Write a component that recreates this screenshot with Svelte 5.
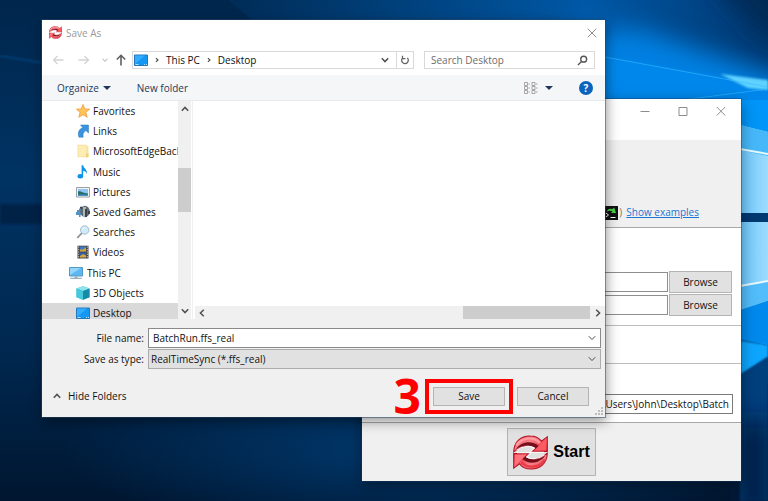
<script lang="ts">
  type TreeItem = { name: string; icon: string; root?: boolean; selected?: boolean };

  const folders: TreeItem[] = [
    { name: 'Favorites', icon: 'star' },
    { name: 'Links', icon: 'link' },
    { name: 'MicrosoftEdgeBack', icon: 'folder' },
    { name: 'Music', icon: 'music' },
    { name: 'Pictures', icon: 'picture' },
    { name: 'Saved Games', icon: 'games' },
    { name: 'Searches', icon: 'search' },
    { name: 'Videos', icon: 'video' },
    { name: 'This PC', icon: 'pc', root: true },
    { name: '3D Objects', icon: 'cube' },
    { name: 'Desktop', icon: 'desktop', selected: true }
  ];

  let fileName = $state('BatchRun.ffs_real');
  let search = $state('');
  let command = $state('\\Users\\John\\Desktop\\Batch');
  let leftFolder = $state('');
  let rightFolder = $state('');
</script>

{#snippet chevron(dir: string)}
  <svg class="chevron {dir}" viewBox="0 0 10 10" aria-hidden="true">
    <path d="M1.800 3.200 5 6.600 8.200 3.200" fill="none" stroke="currentColor" />
  </svg>
{/snippet}

{#snippet arrow(shine: string, head: string)}
  <path d="M2 49C3 18 24 2 50 3c15 0 26 6 33 15L100 5v43H54l14-11C55 27 28 29 2 49Z" fill="url(#red)" stroke="#b41424" stroke-width="3" />
  <path d="M8 42C24 18 55 15 75 32L66 39C52 26 28 28 8 42Z" fill="#74101e" />
  <path d="M10 30C25 6 59 3 78 23" fill="none" stroke={shine} stroke-width="7" />
  <path d="M78 30 97 12v33H62Z" fill={head} />
  <path d="M10 45C28 31 50 30 62 38L50 50H90" fill="none" stroke="#fff" stroke-width="3" />
{/snippet}

{#snippet syncLogo()}
  <svg class="logo" viewBox="0 0 102 102" aria-hidden="true">
    <defs>
      <linearGradient id="red" x1="0" y1="0" x2="1" y2="1">
        <stop offset="0" stop-color="#e02c3c" />
        <stop offset=".4" stop-color="#f88088" />
        <stop offset=".7" stop-color="#f04450" />
        <stop offset="1" stop-color="#c80c1c" />
      </linearGradient>
    </defs>
    <g>{@render arrow('#ff9ca0', '#fa5c66')}</g>
    <g transform="rotate(180 51 51)">{@render arrow('#e83c48', '#ff747c')}</g>
  </svg>
{/snippet}

{#snippet itemIcon(name: string)}
  <svg class="item-icon" viewBox="0 0 14 14" aria-hidden="true">
    {#if name === 'star'}
      <path d="m7 .5 1.800 4.400 4.800.3L9.900 8.300l1.300 5L7 10.700l-4.200 2.600 1.300-5L.4 5.200l4.800-.3Z" fill="#ffc35a" stroke="#ee9a3c" stroke-width=".8" />
    {:else if name === 'link'}
      <path d="M4.500 1h8v8L9.900 6.600C7.500 8 6.500 10 7.200 13.200H3C1.300 8.500 3 5.200 6.800 3.500Z" fill="#3b93de" stroke="#2675bd" stroke-width=".5" />
    {:else if name === 'folder'}
      <path d="M1.500.7h9.300v1l1.600.6v11H1.500Z" fill="#f8e29c" />
      <path d="M2.500 1.700h8v10.500h-8Z" fill="#fdecb4" />
      <path d="M10 9.500h2.500v3.800H10Z" fill="#f1d27a" />
    {:else if name === 'music'}
      <ellipse cx="4.300" cy="11.300" rx="2.800" ry="2.200" fill="#0b93ea" />
      <path d="M5.600.2h1.600C7.500 3.700 12 4.200 10.600 9.300c-.3-2.300-1.500-3-3.400-3.500v5.500H5.600Z" fill="#0b93ea" />
    {:else if name === 'picture'}
      <path d="M.5 2.500h13v9.500H.5Z" fill="#f3f3f3" stroke="#9a9fa5" />
      <path d="M2 4h10v6.500H2Z" fill="#8ec6f1" />
      <path d="M2 6.500c3-.8 5 2 10 2v2H2Z" fill="#286e68" />
      <path d="M2 9.300h10v1.200H2Z" fill="#2f7ec0" />
    {:else if name === 'games'}
      <path d="M1 5h2V3.500h3V10H4.500v2H3v-2H0V7h1Z" fill="#4f94c4" />
      <ellipse cx="9" cy="6.500" rx="4.700" ry="5.700" fill="#606a70" />
      <path d="M7 2h3v10H7Z" fill="#aeb7bc" />
      <path d="M9 4h2v8H9ZM4 1.800h2.500v2H4ZM12 6h2v3h-2Z" fill="#3b4248" />
    {:else if name === 'search'}
      <path d="M5.800 8.200 1.200 13" stroke="#8d9298" stroke-width="1.800" />
      <circle cx="8.700" cy="5" r="4.200" fill="#cfeafa" stroke="#a5bccb" />
      <path d="M6.300 4.500Q7.500 2.500 9.500 2.700" fill="none" stroke="#fff" />
    {:else if name === 'video'}
      <path d="M1.500.7h11v12.800h-11Z" fill="#454545" />
      <path d="M4 1.500h6v5H4Z" fill="#3e79c4" />
      <path d="M4 7.500h6v5H4Z" fill="#2e61ab" />
      <path d="M4 4.500h3l3-2v4H4ZM4 11l3-2 3 1.500v2H4Z" fill="#d8a437" />
      <path d="M2.700 1.500v12M11.300 1.500v12" stroke="#cfcfcf" stroke-dasharray="1.200 1.200" />
    {:else if name === 'pc'}
      <path d="M.5 1.500h13v8.500H.5Z" fill="#5db8f2" stroke="#5499c4" />
      <path d="m1 9 11-7H1Z" fill="#92d6fb" />
      <path d="M5.500 10.500h3v1.200h4.200V13H1.300v-1.300h4.200Z" fill="#9bb0be" />
    {:else if name === 'cube'}
      <path d="m7 .3 6.500 2.200v8.800L7 13.700.5 11.300V2.500Z" fill="#2bb2c9" />
      <path d="M.5 2.500 7 .3l6.500 2.200L7 5Z" fill="#91e4ee" />
      <path d="M.5 2.500 7 5v8.700L.5 11.300Z" fill="#43c8dc" />
      <path d="m10 4 3.500-1.500v8.800L7 13.700V5Z" fill="#168ba7" />
    {:else}
      <path d="M.5 2h13v10.500H.5Z" fill="#1697f1" stroke="#2477b8" />
      <path d="m1 11 10-8.500H1Z" fill="#34acff" />
      <path d="M1.500 11.500h3M10 11.500h1M12 11.500h1" stroke="#b4e2ff" />
    {/if}
  </svg>
{/snippet}

<div class="screen">
  <svg class="wallpaper" viewBox="0 0 768 501" preserveAspectRatio="none" aria-hidden="true">
    <defs>
      <linearGradient id="base" x1="0" y1="0" x2="0" y2="1">
        <stop offset="0" stop-color="#00264c" />
        <stop offset=".35" stop-color="#003363" />
        <stop offset=".7" stop-color="#002850" />
        <stop offset="1" stop-color="#001630" />
      </linearGradient>
      <linearGradient id="glow" gradientUnits="userSpaceOnUse" x1="180" y1="0" x2="760" y2="0">
        <stop offset="0" stop-color="#0055a0" stop-opacity="0" />
        <stop offset=".7" stop-color="#0058a6" />
        <stop offset="1" stop-color="#003a74" />
      </linearGradient>
      <linearGradient id="pane" x1="0" y1="0" x2="1" y2="0">
        <stop offset="0" stop-color="#6cc6fc" />
        <stop offset="1" stop-color="#9cdcff" />
      </linearGradient>
      <radialGradient id="low">
        <stop offset="0" stop-color="#00396e" />
        <stop offset="1" stop-color="#00396e" stop-opacity="0" />
      </radialGradient>
      <filter id="soft" x="-30%" y="-30%" width="160%" height="160%"><feGaussianBlur stdDeviation="12" /></filter>
      <filter id="thin"><feGaussianBlur stdDeviation="1" /></filter>
    </defs>
    <rect width="768" height="501" fill="url(#base)" />
    <ellipse cx="420" cy="450" rx="360" ry="90" fill="url(#low)" />
    <path d="M180-40H820V400L600 330 300 60Z" fill="url(#glow)" />
    <path d="m570 30 70 0 180 60V340H570Z" fill="#0080e2" filter="url(#soft)" />
    <path d="M690-40h130V56L760 34Z" fill="#002b57" filter="url(#soft)" />
    <path d="m605 57 163 28v50l-163-15Z" fill="#008cf2" opacity=".6" filter="url(#thin)" />
    <path d="m720 74 48 6v10l-20-2Z" fill="#5fd2ff" filter="url(#thin)" />
    <path d="m605 57 163 30M690 99l78-10" fill="none" stroke="#36baff" opacity=".6" />
    <path d="M740 100h28v35l-28-8Z" fill="#0095f8" />
    <path d="m740 125 28 7v81h-28Z" fill="url(#pane)" />
    <path d="m740 125 28 7v24l-28-6Z" fill="#46b8fa" />
    <path d="m740 149 28 5" stroke="#e5faff" stroke-width="2" />
    <path d="M740 213h28v9h-28Z" fill="#003971" />
    <path d="M740 222h28v62l-28 5Z" fill="url(#pane)" />
    <path d="m740 286 28-5v20l-28 10Z" fill="#52bdfa" />
    <path d="m740 286 28-5" stroke="#e5faff" stroke-width="2" />
    <path d="m740 310 28-9v44l-28-6Z" fill="#0089ed" />
    <path d="m740 341 28 4v12l-28 18Z" fill="#0ba6ff" filter="url(#thin)" />
    <path d="m740 375 28-18v144h-28Z" fill="#003f7d" filter="url(#thin)" />
    <path d="M740 420h28v101h-28Z" fill="#001f42" filter="url(#soft)" />
    <path d="M0 204h44v20H0Z" fill="#002247" filter="url(#thin)" />
    <path d="m0 56 44 7" stroke="#00539a" filter="url(#thin)" />
  </svg>

  <main class="window app-window">
    <header class="app-title">
      <button aria-label="Minimize"><svg viewBox="0 0 10 10"><path d="M.5 5.500h9" /></svg></button>
      <button aria-label="Maximize"><svg viewBox="0 0 10 10"><path d="M1 1.500h8v8H1Z" /></svg></button>
      <button aria-label="Close"><svg viewBox="0 0 10 10"><path d="m.8 1 8.400 8.500M9.200 1 .8 9.500" /></svg></button>
    </header>
    <section class="hint">
      <svg class="terminal" viewBox="0 0 14 14" aria-hidden="true">
        <path d="M0 0h14v14H0Z" fill="#111" />
        <path d="M2.500 6Q4 1.500 8.500 3l1.700-1.500L12 7H7l1.500-1.700Q5 4 2.500 6Z" fill="#48d448" />
        <path d="m2 7 2.500 2L2 11M6.500 11.500h5" fill="none" stroke="#fff" />
      </svg>
      <span class="paren">)</span>
      <a href="#examples">Show examples</a>
    </section>
    <section class="paths">
      <div class="path-row">
        <input type="text" aria-label="Folder to watch" bind:value={leftFolder} />
        <button class="push">Browse</button>
      </div>
      <div class="path-row">
        <input type="text" aria-label="Second folder to watch" bind:value={rightFolder} />
        <button class="push">Browse</button>
      </div>
    </section>
    <section class="delay"></section>
    <section class="command">
      <input type="text" aria-label="Command line" bind:value={command} />
    </section>
    <footer class="app-footer">
      <button class="push start">{@render syncLogo()}<span>Start</span></button>
    </footer>
  </main>

  <div class="window dialog" role="dialog" aria-label="Save As">
    <header class="dialog-title">
      {@render syncLogo()}
      <span>Save As</span>
      <button aria-label="Close dialog"><svg viewBox="0 0 10 10"><path d="m.8.8 8.400 8.400M9.200.8.8 9.200" /></svg></button>
    </header>

    <nav class="nav-bar">
      <button class="nav-arrow" aria-label="Back" disabled><svg viewBox="0 0 12 12"><path d="M11.500 6H1.500M5.500 2l-4 4 4 4" /></svg></button>
      <button class="nav-arrow" aria-label="Forward" disabled><svg viewBox="0 0 12 12"><path d="M.5 6h10M6.500 2l4 4-4 4" /></svg></button>
      <button class="recent" aria-label="Recent locations" disabled>{@render chevron('down')}</button>
      <button class="nav-arrow up-arrow" aria-label="Up"><svg viewBox="0 0 12 12"><path d="M6 11.500v-10M1.800 5.500 6 1.300l4.200 4.200" /></svg></button>
      <div class="address">
        {@render itemIcon('desktop')}
        {@render chevron('right')}
        <button>This PC</button>
        {@render chevron('right')}
        <button>Desktop</button>
        <button class="drop" aria-label="Previous locations">{@render chevron('down')}</button>
        <button class="refresh" aria-label="Refresh">
          <svg viewBox="0 0 12 12"><path d="M8.800 3.500A4 4 0 1 1 3.500 3.200M3 .8v3.400h3.500" /></svg>
        </button>
      </div>
      <div class="search">
        <input type="text" aria-label="Search Desktop" placeholder="Search Desktop" bind:value={search} />
        <svg viewBox="0 0 12 12" aria-hidden="true"><circle cx="7.300" cy="4.500" r="3.200" /><path d="M5 7 1 11" /></svg>
      </div>
    </nav>

    <div class="toolbar">
      <button>Organize <i class="caret"></i></button>
      <button>New folder</button>
      <button class="views" aria-label="Change your view">
        <svg viewBox="0 0 14 12"><path d="M.5.5h3v3h-3zM.5 4.500h3v3h-3zM.5 8.500h3v3h-3zM8 .5h3v3H8zM8 4.500h3v3H8zM8 8.500h3v3H8zM4.500 2H6M4.500 6H6M4.500 10H6M12 2h1.500M12 6h1.500M12 10h1.500" /></svg>
        <i class="caret"></i>
      </button>
      <button class="help" aria-label="Help">?</button>
    </div>

    <div class="browser">
      <div class="tree">
        <ul>
          {#each folders as item}
            <li class:root={item.root} class:selected={item.selected}>
              {@render itemIcon(item.icon)}
              <span>{item.name}</span>
            </li>
          {/each}
        </ul>
      </div>
      <div class="v-scroll">
        {@render chevron('up')}
        <div class="track"><div class="thumb"></div></div>
        {@render chevron('down')}
      </div>
      <div class="files">
        <div class="h-scroll">
          {@render chevron('left')}
          <div class="track"><div class="thumb"></div></div>
          {@render chevron('right')}
        </div>
      </div>
    </div>

    <form class="fields" onsubmit={(e) => e.preventDefault()}>
      <label for="file-name">File name:</label>
      <div class="combo">
        <input id="file-name" type="text" bind:value={fileName} />
        {@render chevron('down')}
      </div>
      <label for="file-type">Save as type:</label>
      <div class="combo type">
        <select id="file-type"><option>RealTimeSync (*.ffs_real)</option></select>
        {@render chevron('down')}
      </div>
    </form>

    <footer class="actions">
      <button class="hide">{@render chevron('up')} Hide Folders</button>
      <span class="step">3</span>
      <div class="mark"><button class="push">Save</button></div>
      <button class="push">Cancel</button>
      <svg class="grip" viewBox="0 0 8 8" aria-hidden="true">
        <path d="M6 0h2v2H6zM3 3h2v2H3zM6 3h2v2H6zM0 6h2v2H0zM3 6h2v2H3zM6 6h2v2H6z" />
      </svg>
    </footer>
  </div>
</div>

<style>
  :global(body) {
    background: #002347;
  }

  .screen {
    position: relative;
    min-height: 100vh;
    overflow: hidden;
    font: 10px/16px 'Open Sans', 'Noto Sans', sans-serif;
    color: #111;
  }

  .screen * {
    box-sizing: border-box;
  }

  button,
  input,
  select {
    margin: 0;
    padding: 0;
    border: 0;
    border-radius: 0;
    background: none;
    font: inherit;
    color: inherit;
    outline: 0;
  }

  svg {
    display: block;
    flex: none;
  }

  .wallpaper {
    position: absolute;
    inset: 0;
    width: 100%;
    height: 100%;
  }

  .window {
    position: absolute;
    display: flex;
    flex-direction: column;
  }

  .push {
    height: 21px;
    border: 1px solid #b4b4b4;
    background: #e1e1e1;
  }

  .chevron {
    width: 10px;
    height: 10px;
    stroke-width: 1.5;
    color: #505050;
  }

  .chevron.up {
    transform: rotate(180deg);
  }

  .chevron.left {
    transform: rotate(90deg);
  }

  .chevron.right {
    transform: rotate(-90deg);
  }

  .caret {
    border: 4px solid transparent;
    border-top-color: #1e395b;
    border-bottom: 0;
  }

  .item-icon {
    width: 14px;
    height: 14px;
  }

  /* RealTimeSync window */
  .app-window {
    top: 99px;
    left: 362px;
    right: 27px;
    background: #fff;
    box-shadow: 0 0 0 1px rgba(20, 60, 100, 0.4), 0 4px 14px rgba(0, 0, 0, 0.4);
  }

  .app-title {
    display: flex;
    justify-content: flex-end;
    gap: 28px;
    height: 41px;
    padding: 7px 15px;
  }

  .app-title button,
  .dialog-title button {
    width: 10px;
    height: 10px;
    fill: none;
    stroke: #8c8c8c;
  }

  .hint {
    display: flex;
    align-items: flex-end;
    justify-content: flex-end;
    height: 88px;
    padding: 0 42px 7px 0;
    border-bottom: 1px solid #a8a8a8;
    background: #f0f0f0;
  }

  .terminal {
    width: 14px;
    height: 14px;
  }

  .paren {
    width: 8px;
    padding-left: 1px;
    color: #8a7350;
  }

  .hint a {
    color: #1c74d4;
  }

  .paths {
    display: flex;
    flex-direction: column;
    gap: 1px;
    height: 98px;
    padding: 43px 9px 0 9px;
    border-bottom: 1px solid #bdbdbd;
  }

  .path-row {
    display: flex;
    align-items: center;
    gap: 1px;
  }

  .path-row input {
    flex: 1;
    min-width: 0;
    height: 20px;
    border: 1px solid #8e8e8e;
  }

  .path-row .push {
    width: 63px;
    height: 22px;
  }

  .delay {
    height: 38px;
    border-bottom: 1px solid #bdbdbd;
  }

  .command {
    height: 59px;
    padding: 30px 8px 0 8px;
    border-bottom: 1px solid #a8a8a8;
  }

  .command input {
    width: 100%;
    height: 20px;
    padding: 0 3px;
    border: 1px solid #7a7a7a;
    text-align: right;
  }

  .app-footer {
    display: flex;
    justify-content: center;
    padding: 5px;
    background: #f0f0f0;
  }

  .start {
    display: flex;
    align-items: center;
    gap: 5px;
    height: 48px;
    padding: 0 5px;
    color: #000;
    font: bold 16px/20px 'Liberation Sans', Arial, sans-serif;
  }

  .start .logo {
    width: 35px;
    height: 35px;
  }

  /* Save As dialog */
  .dialog {
    top: 20px;
    left: 42px;
    right: 163px;
    background: #f0f0f0;
    box-shadow: 0 0 0 1px rgba(40, 70, 100, 0.5), 1px 4px 12px rgba(0, 0, 0, 0.45);
  }

  .dialog-title {
    display: flex;
    align-items: center;
    gap: 4px;
    height: 25px;
    padding: 0 8px 0 7px;
    background: #fff;
    color: #999;
  }

  .dialog-title .logo {
    width: 13px;
    height: 13px;
  }

  .dialog-title button {
    margin-left: auto;
  }

  .nav-bar {
    display: flex;
    align-items: center;
    height: 30px;
    padding: 0 10px;
    background: #fff;
  }

  .nav-arrow {
    width: 12px;
    margin-right: 14px;
    fill: none;
    stroke: #d4d4d4;
    stroke-width: 1.3;
  }

  .recent {
    margin: 0 6px 0 -3px;
  }

  .recent .chevron {
    width: 8px;
    height: 8px;
    color: #ccc;
  }

  .up-arrow {
    margin-right: 5px;
    stroke: #606060;
    stroke-width: 1.6;
  }

  .address {
    display: flex;
    flex: 1;
    align-items: center;
    gap: 6px;
    height: 18px;
    padding-left: 1px;
    border: 1px solid #d9d9d9;
  }

  .address .right {
    width: 6px;
    height: 6px;
    stroke-width: 2;
  }

  .address .drop {
    margin-left: auto;
  }

  .refresh {
    display: grid;
    place-items: center;
    width: 17px;
    height: 16px;
    border-left: 1px solid #d9d9d9;
  }

  .refresh svg {
    width: 10px;
    fill: none;
    stroke: #606060;
    stroke-width: 1.5;
  }

  .search {
    display: flex;
    align-items: center;
    width: 171px;
    height: 18px;
    margin-left: 10px;
    padding: 0 6px;
    border: 1px solid #d9d9d9;
  }

  .search input {
    flex: 1;
    min-width: 0;
  }

  .search input::placeholder {
    color: #6d6d6d;
    opacity: 1;
  }

  .search svg {
    width: 11px;
    fill: none;
    stroke: #555;
    stroke-width: 1.5;
  }

  .toolbar {
    display: flex;
    align-items: center;
    gap: 26px;
    height: 26px;
    padding: 0 12px 0 15px;
    border-bottom: 1px solid #e9eaeb;
    background: #f5f6f7;
    color: #1e395b;
  }

  .toolbar button {
    display: flex;
    align-items: center;
    gap: 4px;
  }

  .toolbar .views {
    gap: 7px;
    margin-left: auto;
  }

  .views svg {
    width: 14px;
    height: 12px;
    fill: none;
    stroke: #a8a4a4;
  }

  .toolbar .help {
    justify-content: center;
    width: 14px;
    height: 14px;
    border-radius: 50%;
    background: #0a63bd;
    color: #fff;
    font-weight: bold;
  }

  .browser {
    display: flex;
    height: 218px;
    background: #fff;
  }

  .tree {
    width: 136px;
    overflow: hidden;
  }

  .tree ul {
    display: flex;
    flex-direction: column;
    height: 222px;
    margin: 0;
    padding: 0;
    list-style: none;
  }

  .tree li {
    display: flex;
    flex: 1;
    align-items: center;
    gap: 3px;
    padding-left: 34px;
    white-space: nowrap;
  }

  .tree .root {
    padding-left: 27px;
    gap: 4px;
  }

  .tree .selected {
    background: #d9d9d9;
  }

  .v-scroll {
    display: flex;
    flex-direction: column;
    align-items: center;
    justify-content: space-between;
    width: 13px;
    padding: 3px 0;
    background: #f0f0f0;
  }

  .track {
    flex: 1;
    align-self: stretch;
  }

  .thumb {
    background: #cdcdcd;
  }

  .v-scroll .thumb {
    height: 44px;
    margin-top: 54px;
  }

  .files {
    display: flex;
    flex: 1;
    align-items: flex-end;
    margin-left: 1px;
    border-left: 1px solid #f0f0f0;
  }

  .h-scroll {
    display: flex;
    flex: 1;
    align-items: center;
    gap: 3px;
    height: 13px;
    margin-left: 2px;
    padding: 0 2px;
    background: #f0f0f0;
  }

  .h-scroll .track {
    display: flex;
    justify-content: flex-end;
  }

  .h-scroll .thumb {
    width: 127px;
  }

  .fields {
    display: grid;
    grid-template-columns: 102px 1fr;
    column-gap: 4px;
    row-gap: 1px;
    align-items: center;
    padding: 9px 4px 0 0;
  }

  .fields label {
    text-align: right;
  }

  .combo {
    display: flex;
    align-items: center;
    height: 20px;
    padding: 0 3px 0 4px;
    border: 1px solid #8a8a8a;
    background: #fff;
  }

  .combo.type {
    padding-left: 2px;
    border-color: #acacac;
    background: #e1e1e1;
  }

  .combo input,
  .combo select {
    flex: 1;
    min-width: 0;
    appearance: none;
  }

  .combo .chevron {
    stroke-width: 1;
  }

  .actions {
    position: relative;
    display: flex;
    align-items: center;
    height: 48px;
    padding: 6px 16px 0 10px;
  }

  .hide {
    display: flex;
    align-items: center;
    gap: 6px;
  }

  .step {
    margin-left: auto;
    color: #f00;
    font: bold 48px/34px 'Open Sans', sans-serif;
  }

  .mark {
    margin: 0 4px;
    padding: 4px;
    border: 4px solid #f00;
  }

  .actions .push {
    display: block;
    width: 72px;
    height: 19px;
  }

  .grip {
    position: absolute;
    right: 2px;
    bottom: 2px;
    width: 8px;
    height: 8px;
    fill: #bdbdbd;
  }
</style>
